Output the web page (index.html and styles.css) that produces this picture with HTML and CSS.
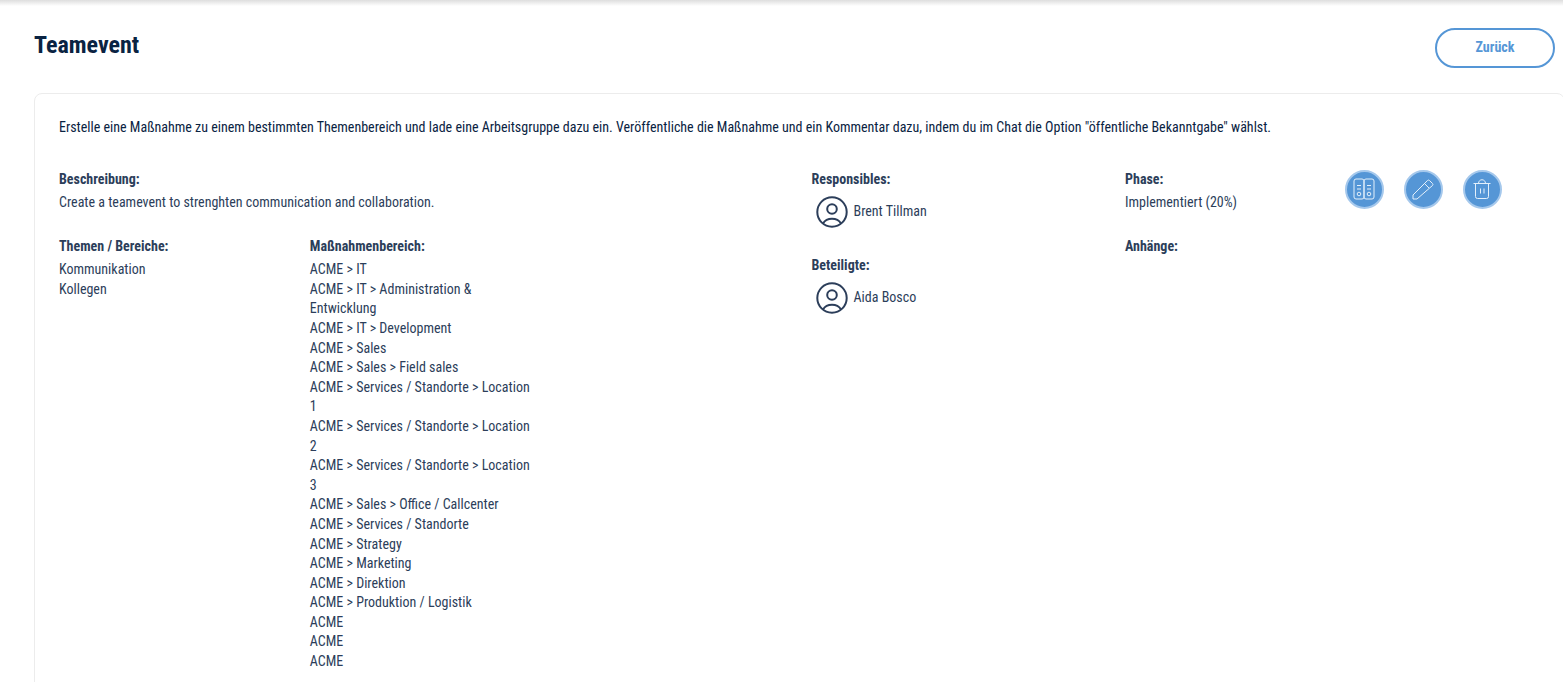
FILE: index.html
```html
<!DOCTYPE html>
<html lang="de">
<head>
  <meta charset="UTF-8">
  <meta name="viewport" content="width=device-width, initial-scale=1.0">
  <title>Teamevent</title>
  <link rel="stylesheet" href="styles.css">
</head>
<body>
  <svg class="sprite" aria-hidden="true">
    <symbol id="icon-user" viewBox="0 0 32 32">
      <circle cx="16" cy="16" r="14.7"/>
      <circle cx="16" cy="13" r="4.8"/>
      <path d="M7 27.5c1.8-3 5-4.7 9-4.7s7.2 1.7 9 4.7"/>
    </symbol>
  </svg>
  <main class="page">
    <header class="page-header">
      <h1>Teamevent</h1>
      <button type="button" class="button">Zurück</button>
    </header>
    <section class="card">
      <p class="intro">Erstelle eine Maßnahme zu einem bestimmten Themenbereich und lade eine Arbeitsgruppe dazu ein. Veröffentliche die Maßnahme und ein Kommentar dazu, indem du im Chat die Option "öffentliche Bekanntgabe" wählst.</p>
      <div class="details">
        <div class="details-main">
          <div class="field description">
            <h2>Beschreibung:</h2>
            <p>Create a teamevent to strenghten communication and collaboration.</p>
          </div>
          <div class="field">
            <h2>Themen / Bereiche:</h2>
            <ul>
              <li>Kommunikation</li>
              <li>Kollegen</li>
            </ul>
          </div>
          <div class="field areas">
            <h2>Maßnahmenbereich:</h2>
            <ul>
              <li>ACME &gt; IT</li>
              <li>ACME &gt; IT &gt; Administration &amp; Entwicklung</li>
              <li>ACME &gt; IT &gt; Development</li>
              <li>ACME &gt; Sales</li>
              <li>ACME &gt; Sales &gt; Field sales</li>
              <li>ACME &gt; Services / Standorte &gt; Location 1</li>
              <li>ACME &gt; Services / Standorte &gt; Location 2</li>
              <li>ACME &gt; Services / Standorte &gt; Location 3</li>
              <li>ACME &gt; Sales &gt; Office / Callcenter</li>
              <li>ACME &gt; Services / Standorte</li>
              <li>ACME &gt; Strategy</li>
              <li>ACME &gt; Marketing</li>
              <li>ACME &gt; Direktion</li>
              <li>ACME &gt; Produktion / Logistik</li>
              <li>ACME</li>
              <li>ACME</li>
              <li>ACME</li>
            </ul>
          </div>
        </div>
        <div class="details-people">
          <div class="field">
            <h2>Responsibles:</h2>
            <p class="person"><svg class="avatar" aria-hidden="true"><use href="#icon-user"/></svg>Brent Tillman</p>
          </div>
          <div class="field">
            <h2>Beteiligte:</h2>
            <p class="person"><svg class="avatar" aria-hidden="true"><use href="#icon-user"/></svg>Aida Bosco</p>
          </div>
        </div>
        <div class="details-status">
          <div class="field">
            <h2>Phase:</h2>
            <p>Implementiert (20%)</p>
          </div>
          <div class="field">
            <h2>Anhänge:</h2>
          </div>
        </div>
        <div class="actions">
          <button type="button" class="icon-button" aria-label="Ordner">
            <svg viewBox="0 0 24 24">
              <rect x="2" y="2" width="10" height="20" rx="2"/>
              <rect x="12" y="2" width="10" height="20" rx="2"/>
              <path d="M5 8.5h4M5 12h4M15 8.5h4M15 12h4"/>
              <circle cx="7" cy="17" r="1.8"/>
              <circle cx="17" cy="17" r="1.8"/>
            </svg>
          </button>
          <button type="button" class="icon-button" aria-label="Bearbeiten">
            <svg viewBox="0 0 24 24">
              <path d="M2 22v-4L16.5 3.5a1.500 1.500 0 0 1 2 0l3 3a1.500 1.500 0 0 1 0 2L6 22zM13.500 6.500l4.500 4.500"/>
            </svg>
          </button>
          <button type="button" class="icon-button" aria-label="Löschen">
            <svg viewBox="0 0 24 24">
              <path d="M3.5 6.5h17M5.500 6.500v13a2 2 0 0 0 2 2h9a2 2 0 0 0 2-2v-13M8.500 6.500c0-5 7-5 7 0M10.500 11.500v5M14 11.500v5"/>
            </svg>
          </button>
        </div>
      </div>
    </section>
  </main>
</body>
</html>
```
FILE: styles.css
```css
:root {
  --color: #2c3e5a;
  --color-dark: #0a2342;
  --color-primary: #5596d6;
  --border-color: #ececec;
}
* {
  margin: 0;
  padding: 0;
  box-sizing: border-box;
}
body {
  font-family: "Roboto Condensed", Roboto, sans-serif;
  font-size: 14px;
  line-height: 1.4;
  color: var(--color);
  background-color: #fff;
}
ul {
  list-style: none;
}
.sprite {
  display: none;
}
.page {
  padding: 28px 0 0 34px;
  overflow: hidden;
  background: linear-gradient(#dedede, #fff 6px);
}

/* Header */

.page-header {
  display: flex;
  justify-content: space-between;
  padding-right: 8px;
  margin-bottom: 25px;
}
h1 {
  font-size: 24px;
  line-height: 34px;
  color: var(--color-dark);
}
.button {
  width: 120px;
  height: 40px;
  font: inherit;
  font-weight: 700;
  color: var(--color-primary);
  background-color: #fff;
  border: 2px solid var(--color-primary);
  border-radius: 20px;
}

/* Card */

.card {
  padding: 24px 0 10px 24px;
  margin-right: -2px; /* right border runs off the page */
  border: 1px solid var(--border-color);
  border-radius: 8px;
}
.intro {
  margin-bottom: 31px;
  color: var(--color-dark);
}
.details {
  display: grid;
  grid-template-columns: 24fr 10fr 7fr 7fr;
}
.details-main {
  display: grid;
  grid-template-columns: repeat(3, 1fr);
  align-content: start;
}
.description {
  grid-column: 1 / -1;
}
.areas {
  padding-right: 24px;
}
.field {
  margin-bottom: 24px;
}
h2 {
  margin-bottom: 4px;
  font-size: 14px;
  line-height: 20px;
}
.person {
  display: flex;
  align-items: center;
  gap: 6px;
  height: 38px;
  padding-left: 4px;
}
.avatar {
  width: 32px;
  height: 32px;
  fill: none;
  stroke: var(--color);
  stroke-width: 2;
}

/* Actions */

.actions {
  display: flex;
  align-items: flex-start;
  gap: 20px;
  padding-top: 1px;
}
.icon-button {
  display: flex;
  align-items: center;
  justify-content: center;
  width: 39px;
  height: 39px;
  background-color: var(--color-primary);
  border: 2px solid #a5c8ec;
  border-radius: 50%;
}
.icon-button svg {
  width: 24px;
  height: 24px;
  fill: none;
  stroke: #e4f0fb;
  stroke-width: 1;
}
```
